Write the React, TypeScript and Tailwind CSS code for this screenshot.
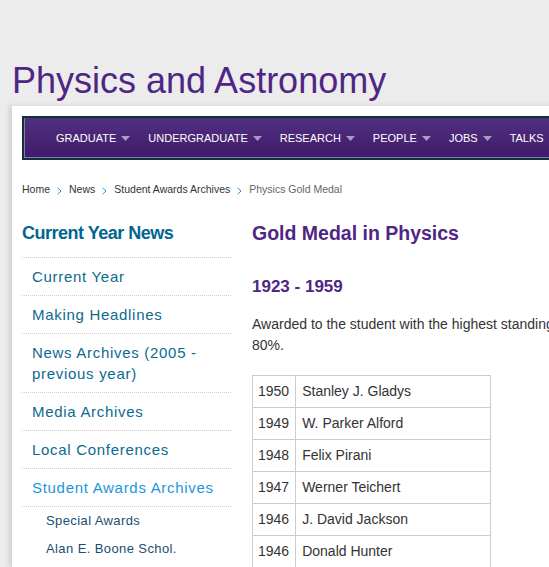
import React from 'react';

const navItems = ['GRADUATE', 'UNDERGRADUATE', 'RESEARCH', 'PEOPLE', 'JOBS', 'TALKS'];

const crumbs = ['Home', 'News', 'Student Awards Archives'];

const sideLinks = [
  { label: 'Current Year' },
  { label: 'Making Headlines' },
  { label: 'News Archives (2005 - previous year)' },
  { label: 'Media Archives' },
  { label: 'Local Conferences' },
  { label: 'Student Awards Archives', active: true },
];

const subLinks = ['Special Awards', 'Alan E. Boone Schol.'];

const winners = [
  ['1950', 'Stanley J. Gladys'],
  ['1949', 'W. Parker Alford'],
  ['1948', 'Felix Pirani'],
  ['1947', 'Werner Teichert'],
  ['1946', 'J. David Jackson'],
  ['1946', 'Donald Hunter'],
];

function Caret() {
  return (
    <svg width="9" height="5" viewBox="0 0 9 5" className="shrink-0">
      <path d="M0 0 H9 L4.5 5 Z" fill="#a79dc2" />
    </svg>
  );
}

function Chevron() {
  return (
    <svg width="5" height="8" viewBox="0 0 5 8" className="mx-[7px] mt-[3px] shrink-0">
      <path d="M0.6 0.8 L4 4 L0.6 7.2" fill="none" stroke="#1a9ad6" strokeWidth="1" />
    </svg>
  );
}

export default function App() {
  return (
    <div
      className="w-[549px] h-[567px] overflow-hidden bg-[#ececec]"
      style={{ fontFamily: '"Liberation Sans", Arial, sans-serif' }}
    >
      <div className="pt-[63px] pl-[12px]">
        {/* Site title */}
        <h1 className="text-[36px] leading-[36px] text-[#4f2683] mb-[7px] whitespace-nowrap">
          Physics and Astronomy
        </h1>

        {/* White page panel */}
        <div className="w-[900px] bg-white pt-[10px] pl-[10px] shadow-[-3px_0_5px_rgba(0,0,0,0.12)]">
          {/* Main nav */}
          <nav className="h-[44px] border-2 border-[#12303b] bg-gradient-to-b from-[#51307f] to-[#3f1b6b] shadow-[inset_1px_-1px_0_#8b78b0] flex items-center pl-[32px] pt-[1px]">
            {navItems.map((item) => (
              <div key={item} className="flex items-center gap-[5px] mr-[18px] text-white text-[11px] leading-none whitespace-nowrap">
                <span>{item}</span>
                <Caret />
              </div>
            ))}
          </nav>

          {/* Breadcrumb */}
          <div className="mt-[22px] flex items-center text-[10.5px] leading-[15px] text-[#333]">
            {crumbs.map((c) => (
              <React.Fragment key={c}>
                <span>{c}</span>
                <Chevron />
              </React.Fragment>
            ))}
            <span className="text-[#666]">Physics Gold Medal</span>
          </div>

          <div className="mt-[24px] flex items-start">
            {/* Sidebar */}
            <aside className="w-[209px] shrink-0">
              <h2 className="text-[18px] leading-[24px] font-bold tracking-[-0.5px] text-[#00668f] mb-[12px]">
                Current Year News
              </h2>
              <ul className="border-t border-dotted border-[#cfcfcf]">
                {sideLinks.map((l) => (
                  <li
                    key={l.label}
                    className={`border-b border-dotted border-[#cfcfcf] py-[8px] pl-[10px] pr-[4px] text-[15px] leading-[21px] tracking-[0.7px] ${
                      l.active ? 'text-[#2196dc]' : 'text-[#0c6a90]'
                    }`}
                  >
                    {l.label}
                  </li>
                ))}
                {subLinks.map((s) => (
                  <li key={s} className="py-[5px] pl-[24px] text-[13px] leading-[18px] tracking-[0.4px] text-[#1b4d70]">
                    {s}
                  </li>
                ))}
              </ul>
            </aside>

            {/* Main content */}
            <main className="ml-[21px] w-[600px]">
              <h1 className="text-[19.5px] leading-[24px] font-bold text-[#4f2683]">Gold Medal in Physics</h1>
              <h3 className="mt-[31px] text-[17px] leading-[22px] font-bold text-[#4f2683]">1923 - 1959</h3>
              <p className="mt-[16px] text-[14px] leading-[21px] text-[#333]">
                <span className="whitespace-nowrap">
                  Awarded to the student with the highest standing in the graduating Honours class, with an average of at least
                </span>
                <br />
                80%.
              </p>

              <table className="mt-[19px] border-collapse text-[14px] leading-[19px] text-[#333]">
                <tbody>
                  {winners.map(([year, name], i) => (
                    <tr key={i}>
                      <td className="border border-[#cccccc] py-[6px] pl-[5px] pr-[6px] w-[43px]">{year}</td>
                      <td className="border border-[#cccccc] py-[6px] px-[6px] w-[195px]">{name}</td>
                    </tr>
                  ))}
                </tbody>
              </table>
            </main>
          </div>
        </div>
      </div>
    </div>
  );
}
